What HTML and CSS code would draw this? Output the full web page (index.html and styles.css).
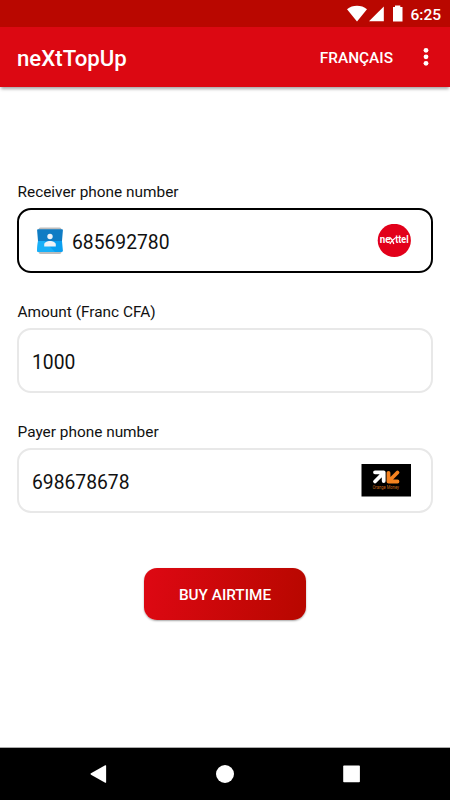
FILE: index.html
```
<!DOCTYPE html>
<html lang="en">

<head>
    <meta charset="UTF-8">
    <meta name="viewport" content="width=device-width, initial-scale=1.0">
    <title>neXtTopUp</title>
    <link rel="stylesheet" href="styles.css">
</head>

<body>
    <div class="status-bar">
        <svg class="status-icons" width="56" height="18" viewBox="0 0 56 18">
            <path d="M0 4.2C5.5-.4 14.5-.4 20 4.2L10 16.5z" fill="#fff"/>
            <path d="M22 16.3L36.8 1.5V16.3z" fill="#fff"/>
            <path d="M46 2.1h2V.6h5.3v1.5h2.2v14.3H46z" fill="#fff"/>
        </svg>
        <span class="clock">6:25</span>
    </div>

    <header class="app-bar">
        <h1>neXtTopUp</h1>
        <button class="lang-button">FRANÇAIS</button>
        <button class="menu-button" aria-label="Menu">
            <svg width="6" height="20" viewBox="0 0 6 20">
                <circle cx="3" cy="3.3" r="2.4"/>
                <circle cx="3" cy="9.8" r="2.4"/>
                <circle cx="3" cy="16.3" r="2.4"/>
            </svg>
        </button>
    </header>

    <form class="topup-form" id="topupForm">
        <label for="receiver">Receiver phone number</label>
        <div class="field active">
            <svg class="contact-icon" width="28" height="28" viewBox="0 0 28 28">
                <rect x="2.5" y=".5" width="23" height="26.5" rx="2" fill="#bdbdbd"/>
                <path d="M2 2.2h24q1 0 .9 1L26 14H2L1.1 3.2q-.1-1 .9-1z" fill="#0f7cc4"/>
                <path d="M2 14h24l.9 9.5q0 1.5-1.5 1.5H2.6Q1.1 25 1.1 23.5z" fill="#0a9ff0"/>
                <path d="M2 14h6.5L19 25H2.6Q1.1 25 1.1 23.5z" fill="#18b0f8"/>
                <circle cx="14" cy="9.5" r="2.7" fill="#eef3f8"/>
                <path d="M8.2 19.6v-2c0-2 3-3.5 5.8-3.5s5.8 1.5 5.8 3.5v2z" fill="#eef3f8"/>
            </svg>
            <input type="text" id="receiver" name="receiver" value="685692780">
            <svg class="nexttel-logo" width="34" height="34" viewBox="0 0 34 34">
                <circle cx="17.3" cy="16.4" r="16.6" fill="#e2001a"/>
                <text x="2.8" y="19.4" textLength="10.8" lengthAdjust="spacingAndGlyphs">ne</text>
                <path d="M12.4 13.2q2.8 1.5 4.4 6.8M18.4 14q-3.6 2-5.6 6" fill="none" stroke="#fff" stroke-width="1.3"/>
                <text x="18.2" y="19.4" textLength="13.4" lengthAdjust="spacingAndGlyphs">ttel</text>
            </svg>
        </div>

        <label for="amount">Amount (Franc CFA)</label>
        <div class="field">
            <input type="text" id="amount" name="amount" value="1000">
        </div>

        <label for="payer">Payer phone number</label>
        <div class="field">
            <input type="text" id="payer" name="payer" value="698678678">
            <svg class="orange-logo" width="50" height="33" viewBox="0 0 50 33">
                <rect x=".5" width="49.5" height="32.5" fill="#000"/>
                <path d="M14 17.5l8-8M14 8.3h8.7V17" fill="none" stroke="#fff" stroke-width="3.8" stroke-linecap="round" stroke-linejoin="round"/>
                <path d="M36.5 8.5l-8 8M27.5 8.8v8.7h9" fill="none" stroke="#f58220" stroke-width="3.8" stroke-linecap="round" stroke-linejoin="round"/>
                <text x="11.5" y="25" textLength="26.5" lengthAdjust="spacingAndGlyphs">Orange Money</text>
            </svg>
        </div>

        <button type="submit" class="buy-button">BUY AIRTIME</button>
    </form>

    <nav class="nav-bar">
        <svg width="18" height="18" viewBox="0 0 18 18"><path d="M1 8.3L15.2.3q.9-.4.9.5v16.4q0 .9-.9.5L1 9.7q-1-.7 0-1.4z"/></svg>
        <svg width="18" height="18" viewBox="0 0 18 18"><circle cx="9" cy="9" r="9"/></svg>
        <svg width="18" height="18" viewBox="0 0 18 18"><rect x="1.2" y=".6" width="16.7" height="16.6" rx=".8"/></svg>
    </nav>
</body>

</html>
```

FILE: styles.css
```
* {
    box-sizing: border-box;
}

body {
    display: flex;
    flex-direction: column;
    height: 800px;
    margin: 0;
    background-color: #fff;
    color: #111;
    font-family: Roboto, sans-serif;
}

svg {
    display: block;
    flex: none;
}

button {
    border: none;
    background: none;
    color: #fff;
    font-family: inherit;
    font-weight: 500;
    cursor: pointer;
}

.status-bar {
    display: flex;
    justify-content: flex-end;
    height: 27px;
    padding: 5px 9px 0 0;
    background-color: #b90700;
}

.clock {
    width: 31px;
    margin-left: 7px;
    color: #fff;
    font-size: 15.5px;
    font-weight: 500;
    line-height: 20px;
    text-align: right;
}

.app-bar {
    display: flex;
    align-items: center;
    height: 60px;
    padding: 0 21px 0 17px;
    background-color: #dc0812;
    box-shadow: 0 3px 3px -1px rgba(0, 0, 0, 0.35);
}

.app-bar h1 {
    flex: 1;
    margin: 1px 0 0;
    color: #fff;
    font-size: 22.2px;
    font-weight: 500;
}

.lang-button {
    padding: 0;
    margin: 1px 30px 0 0;
    font-size: 15.4px;
}

.menu-button {
    padding: 0;
}

.menu-button svg,
.nav-bar svg {
    fill: #fff;
}

.topup-form {
    display: flex;
    flex: 1;
    flex-direction: column;
    padding: 95px 17px 0;
}

label {
    height: 26px;
    padding-left: 0.5px;
    font-size: 15.4px;
    line-height: 20px;
}

.field {
    display: flex;
    align-items: center;
    height: 65px;
    margin-bottom: 29px;
    padding: 0 20px 0 13px;
    border: 2px solid #e8e8e8;
    border-radius: 14px;
}

.field.active {
    border-color: #000;
}

.field input {
    flex: 1;
    min-width: 0;
    padding: 3px 0 0;
    border: none;
    outline: none;
    background: none;
    color: #111;
    font-family: inherit;
    font-size: 19.3px;
}

.contact-icon {
    margin: 0 8px 0 4px;
}

.nexttel-logo text {
    fill: #fff;
    font-size: 10px;
    font-weight: 700;
}

.orange-logo text {
    fill: #c96a1c;
    font-size: 5.5px;
}

.buy-button {
    align-self: center;
    width: 162px;
    height: 52px;
    margin-top: 26px;
    padding-top: 2px;
    border-radius: 13px;
    background: linear-gradient(100deg, #dc0812 5%, #b90700 95%);
    box-shadow: 0 1px 2px rgba(0, 0, 0, 0.35);
    font-size: 15.3px;
}

.nav-bar {
    display: flex;
    align-items: center;
    justify-content: space-between;
    height: 53px;
    padding: 0 90px;
    border-top: 1px solid #aaa;
    background-color: #000;
}
```
